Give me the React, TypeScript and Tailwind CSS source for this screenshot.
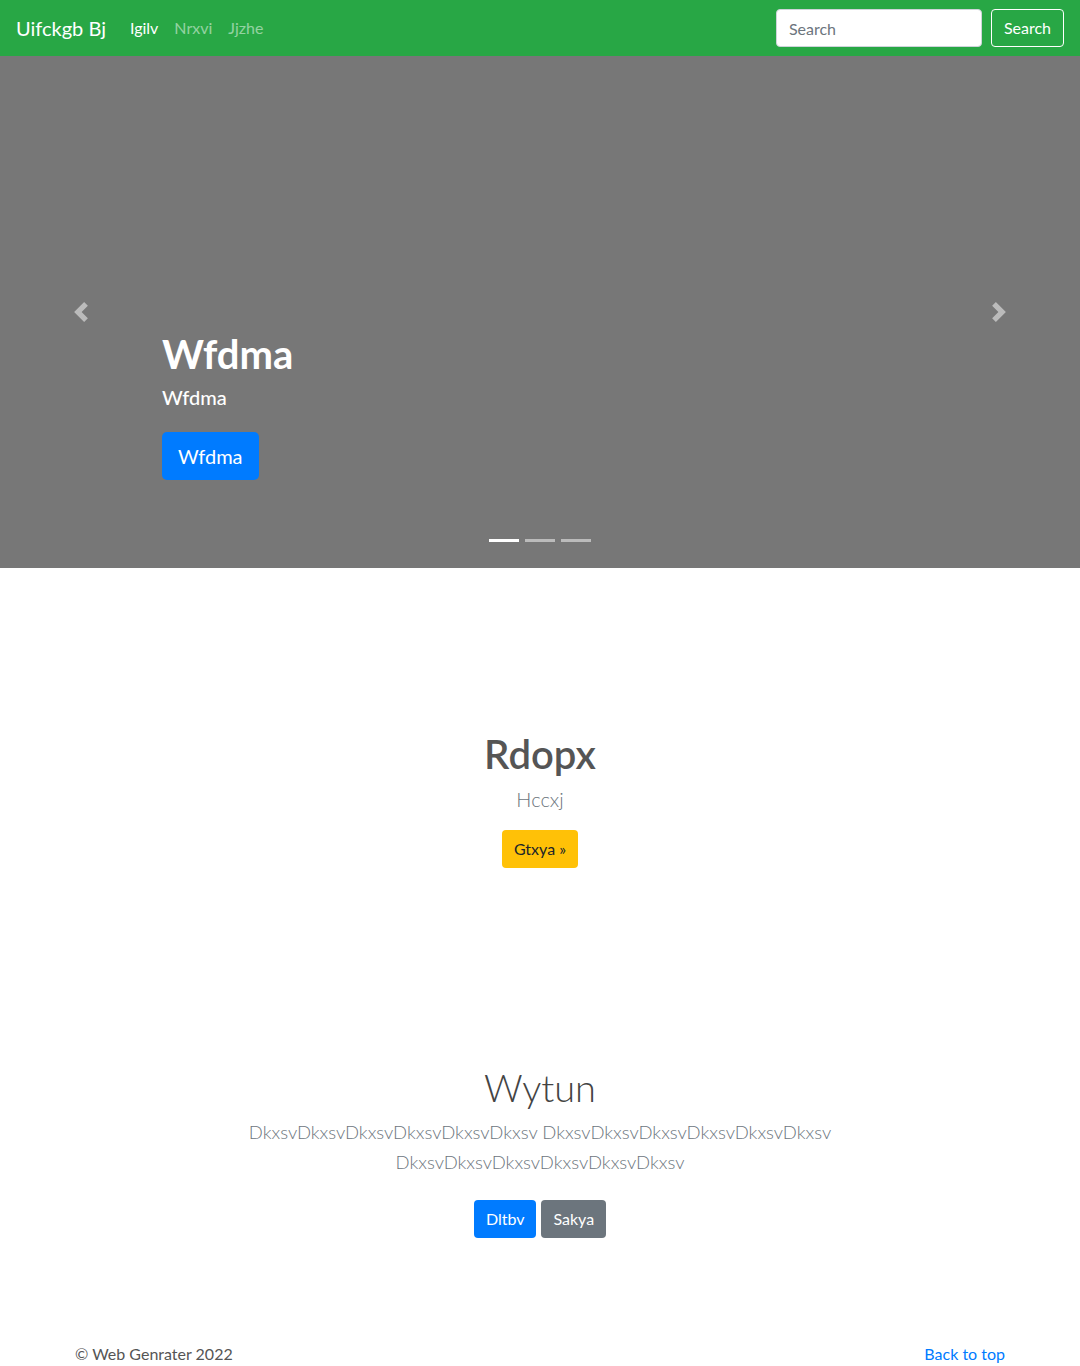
const font = { fontFamily: '"Segoe UI", Lato, "Liberation Sans", sans-serif' };

function Chevron({ flip }: { flip?: boolean }) {
  return (
    <svg
      viewBox="0 0 8 8"
      className={flip ? 'w-5 h-5 rotate-180' : 'w-5 h-5'}
      fill="#ffffff"
    >
      <path d="M5.25 0l-4 4 4 4 1.5-1.5L4.25 4l2.5-2.5L5.25 0z" />
    </svg>
  );
}

export default function App() {
  return (
    <div className="min-h-[1366px] bg-white text-[#212529]" style={font}>
      {/* Navbar */}
      <nav className="h-14 bg-[#28a745] flex items-center px-4">
        <span className="text-[20px] leading-[30px] text-white mr-4">Uifckgb Bj</span>
        <div className="flex items-center text-base leading-6">
          <a className="px-2 text-white">Igilv</a>
          <a className="px-2 text-white/50">Nrxvi</a>
          <a className="px-2 text-white/50">Jjzhe</a>
        </div>
        <div className="ml-auto flex items-center">
          <input
            placeholder="Search"
            className="w-[206px] h-[38px] mr-[9px] rounded bg-white border border-[#ced4da] px-3 text-base text-[#495057] placeholder:text-[#6c757d] outline-none"
            style={font}
          />
          <button className="h-[38px] px-3 rounded border border-white text-white text-base leading-6">
            Search
          </button>
        </div>
      </nav>

      {/* Carousel */}
      <div className="relative h-[512px] bg-[#777777] flex flex-col justify-end pl-[162px] pb-[88px]">
        <div className="absolute left-0 top-0 bottom-0 w-[15%] flex items-center justify-center opacity-50">
          <Chevron />
        </div>
        <div className="absolute right-0 top-0 bottom-0 w-[15%] flex items-center justify-center opacity-50">
          <Chevron flip />
        </div>

        <h1 className="text-[40px] leading-[48px] font-bold text-white mb-1">Wfdma</h1>
        <p className="text-[20px] leading-[30px] font-medium text-white mb-5">Wfdma</p>
        <div>
          <button className="h-12 px-4 rounded-[5px] bg-[#007bff] text-white text-[20px] leading-[30px]">
            Wfdma
          </button>
        </div>

        <div className="absolute bottom-[26px] left-0 right-0 flex justify-center gap-[6px]">
          <span className="w-[30px] h-[3px] bg-white" />
          <span className="w-[30px] h-[3px] bg-white/50" />
          <span className="w-[30px] h-[3px] bg-white/50" />
        </div>
      </div>

      {/* Hero */}
      <section className="pt-[162px] flex flex-col items-center text-center">
        <h1 className="text-[40px] leading-[48px] font-semibold text-[#555555] mb-[6px]">Rdopx</h1>
        <p className="text-[20px] leading-[30px] font-light text-[#6c757d] mb-4">Hccxj</p>
        <button className="h-[38px] px-3 rounded bg-[#ffc107] text-[#212529] text-base leading-6">
          Gtxya &raquo;
        </button>
      </section>

      {/* Album */}
      <section className="pt-[195px] flex flex-col items-center text-center">
        <h1 className="text-[38px] leading-[48px] font-light text-[#444444] mb-[6px]">Wytun</h1>
        <p className="max-w-[610px] text-[18.5px] leading-[30px] font-light text-[#6c757d] mb-[23px] break-words">
          DkxsvDkxsvDkxsvDkxsvDkxsvDkxsv DkxsvDkxsvDkxsvDkxsvDkxsvDkxsv DkxsvDkxsvDkxsvDkxsvDkxsvDkxsv
        </p>
        <div className="flex gap-[5px]">
          <button className="h-[38px] px-3 rounded bg-[#007bff] text-white text-base leading-6">Dltbv</button>
          <button className="h-[38px] px-3 rounded bg-[#6c757d] text-white text-base leading-6">Sakya</button>
        </div>
      </section>

      {/* Footer */}
      <footer className="w-[960px] mx-auto px-[15px] pt-[104px] flex justify-between text-base leading-6">
        <p className="text-[#555555]">&copy; Web Genrater 2022</p>
        <a className="text-[#007bff]">Back to top</a>
      </footer>
    </div>
  );
}
